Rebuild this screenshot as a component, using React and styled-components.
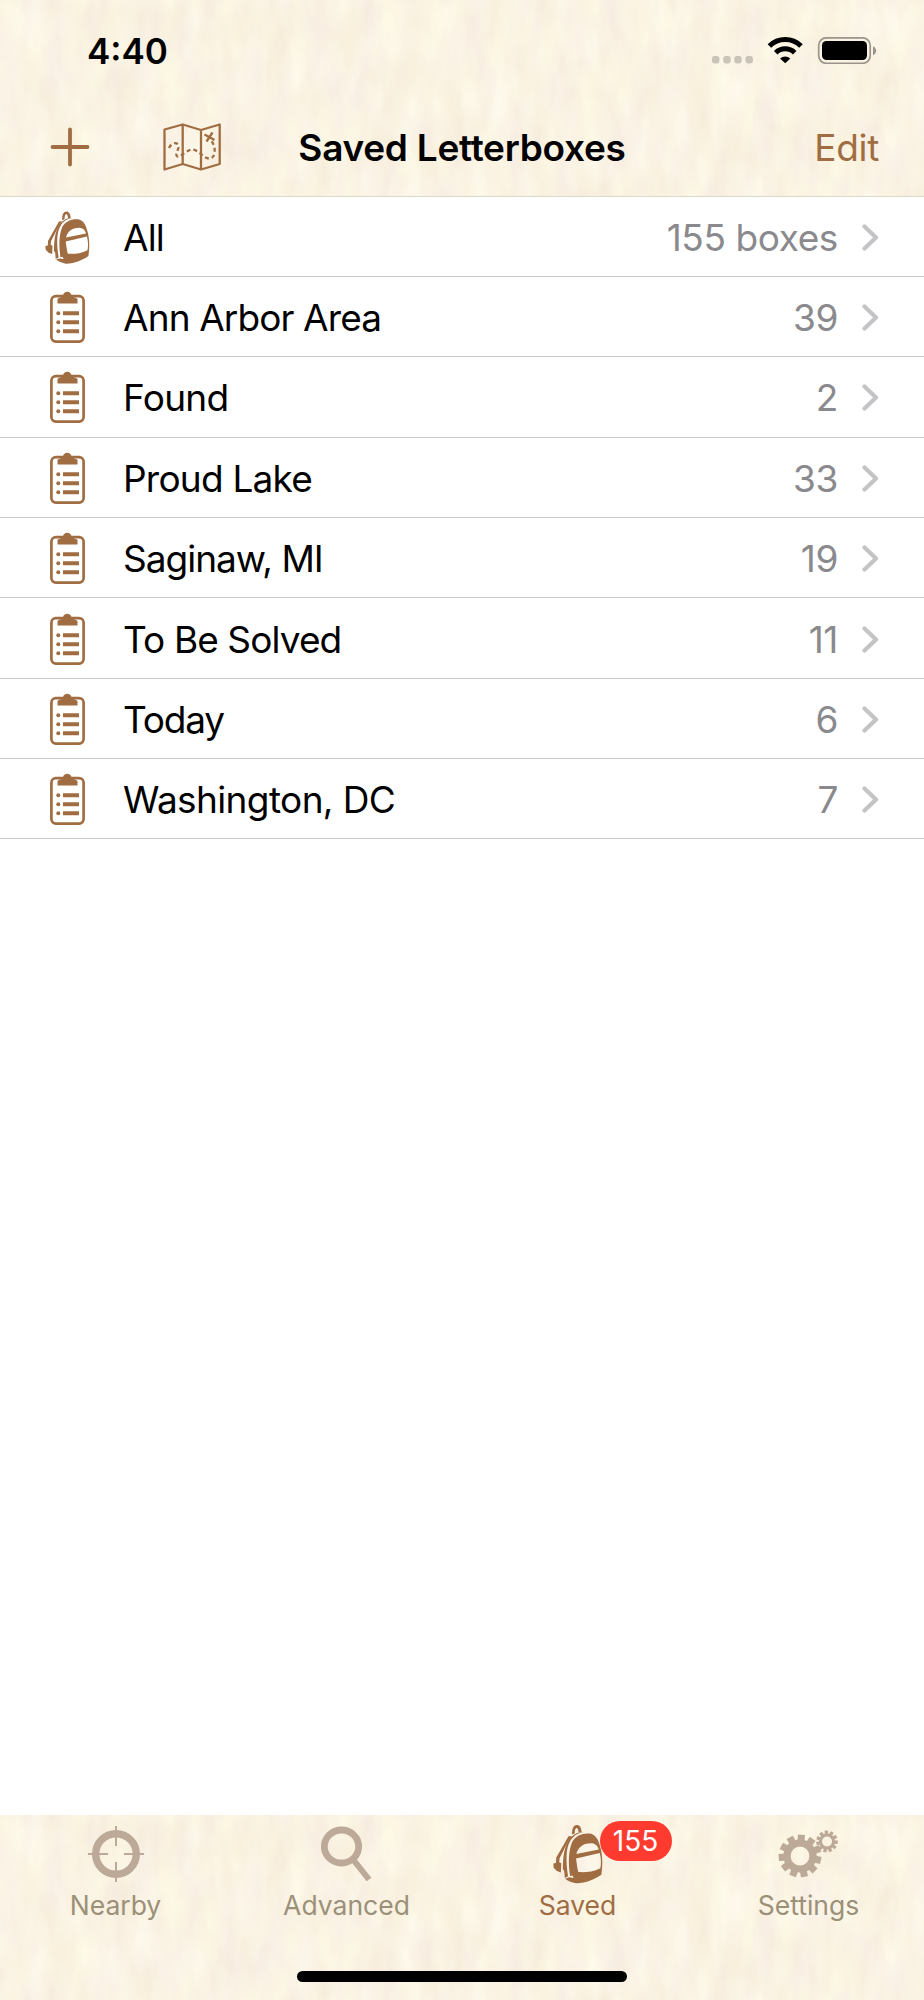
import React from 'react';
import styled, {createGlobalStyle} from 'styled-components';

const GlobalStyle = createGlobalStyle`
    body {
        margin: 0;
        background: #fff;
        font-family: Inter, "Liberation Sans", sans-serif;
    }
`;

const BROWN = '#a06d42';
const MUTED = '#bca998';

const Screen = styled.div`
    display: flex;
    flex-direction: column;
    width: 924px;
    height: 2000px;
    overflow: hidden;
`;

const Paper = styled.div`
    position: relative;
    isolation: isolate;
    flex: none;
    box-sizing: border-box;
    display: flex;
    flex-direction: column;
    background: #faf3e3;
`;

const Header = styled(Paper)`
    height: 196.6px;
    border-bottom: 1px solid #ddd8cc;
`;

const Footer = styled(Paper)`
    height: 185px;
    margin-top: auto;
`;

const Grain = styled.svg`
    position: absolute;
    inset: 0;
    z-index: -1;
    width: 100%;
    height: 100%;
`;

const StatusBar = styled.div`
    display: flex;
    align-items: center;
    height: 101px;
    padding: 0 46px 0 87px;
`;

const Clock = styled.div`
    flex: 1;
    font-size: 35px;
    font-weight: 600;
    letter-spacing: 0;
`;

const NavBar = styled.div`
    display: grid;
    grid-template-columns: 249px 1fr 249px;
    align-items: center;
    height: 92px;
`;

const NavActions = styled.div`
    display: flex;
    align-items: center;
    gap: 73px;
    padding-left: 50px;
`;

const NavTitle = styled.div`
    text-align: center;
    white-space: nowrap;
    font-size: 37px;
    font-weight: 600;
    letter-spacing: -0.27px;
`;

const EditButton = styled.div`
    padding-right: 45px;
    text-align: right;
    font-size: 37px;
    letter-spacing: -0.3px;
    color: ${BROWN};
`;

const Row = styled.div`
    display: flex;
    align-items: center;
    box-sizing: border-box;
    height: 80.36px;
    padding: 2px 45px 0 0;
    border-bottom: 1px solid #c9c9cb;
    font-size: 37px;
`;

const RowIcon = styled.div`
    display: flex;
    justify-content: center;
    width: 135px;
    margin-right: -12px;
`;

const RowName = styled.div`
    flex: 1;
    letter-spacing: ${props => props.$spacing}px;
`;

const RowCount = styled.div`
    margin-right: 24px;
    color: #8a8a8e;
    letter-spacing: -0.4px;
`;

const Tabs = styled.div`
    display: grid;
    grid-template-columns: repeat(4, 1fr);
    height: 156px;
`;

const Tab = styled.div`
    display: flex;
    flex-direction: column;
    align-items: center;
    color: ${props => props.$active ? BROWN : '#9b9078'};
    font-size: 26.5px;
    line-height: 30px;
`;

const TabIcon = styled.div`
    position: relative;
    display: flex;
    align-items: center;
    box-sizing: border-box;
    height: 75px;
    padding-top: 2px;
`;

const Badge = styled.div`
    position: absolute;
    left: 47px;
    top: 6px;
    width: 72px;
    height: 40px;
    border-radius: 20px;
    background: #ff3b30;
    color: #fff;
    text-align: center;
    font-size: 28px;
    line-height: 40px;
`;

const HomeIndicator = styled.div`
    align-self: center;
    width: 330px;
    height: 11px;
    border-radius: 6px;
    background: #000;
`;

// soft vertical fibres of the parchment
function Parchment({id}) {
    return (
        <Grain>
            <filter id={id} x="0" y="0" width="100%" height="100%" colorInterpolationFilters="sRGB">
                <feTurbulence type="fractalNoise" baseFrequency="0.045 0.017" numOctaves="3" seed="8" />
                <feColorMatrix
                    values="0.04 0 0 0 0.961
                            0.08 0 0 0 0.912
                            0.06 0.06 0 0 0.831
                            0 0 0 0 1"
                />
            </filter>
            <rect width="100%" height="100%" filter={`url(#${id})`} />
        </Grain>
    );
}

function Status() {
    return (
        <svg width="166" height="27" viewBox="0 0 166 27">
            <g fill="#c9c4b7">
                <rect x="0" y="19" width="7.4" height="7.4" rx="2.4" />
                <rect x="11.3" y="19" width="7.4" height="7.4" rx="2.4" />
                <rect x="22.3" y="19" width="7.4" height="7.4" rx="2.4" />
                <rect x="33.5" y="19" width="7.4" height="7.4" rx="2.4" />
            </g>
            <g fill="none" stroke="#000" strokeWidth="5">
                <path d="M57.4 9a22.5 22.5 0 0 1 31.6 0" />
                <path d="M63.7 15.700a13.6 13.6 0 0 1 19 0" />
            </g>
            <path d="M73.2 26.2l-5.1-4.7a7.6 7.6 0 0 1 10.2 0z" />
            <rect x="106.7" y="0.9" width="51.5" height="25.4" rx="7.5" fill="none" stroke="#99958b" strokeWidth="1.7" />
            <rect x="110" y="4" width="45" height="19" rx="4.5" />
            <path d="M161 9.3c4.2 1.7 4.2 7.3 0 9z" fill="#99958b" />
        </svg>
    );
}

function PlusIcon() {
    return (
        <svg width="40" height="40" viewBox="0 0 40 40" stroke={BROWN} strokeWidth="3.8" strokeLinecap="round">
            <path d="M20 2.5v35M2.5 20h35" />
        </svg>
    );
}

function MapIcon() {
    return (
        <svg width="58" height="48" viewBox="0 0 58 48" fill="none" stroke={BROWN} strokeWidth="2.3" strokeLinejoin="round">
            <path d="M1.5 6.5L19.7 1.5L38 7L56.7 1.5V41L38 46.5L19.7 41L1.5 46.5zM19.7 1.5V41M38 7V46.5" />
            <path d="M6 25C8 20 14 18.5 15.5 22.5C16.5 26 12.5 29 13.5 32.5C15.5 36.5 21 29 28 26.5C36 26 40 36 47 35.5C53 34.5 53 24 48.5 18" strokeDasharray="4 3" />
            <path d="M41.500 11.500l10 5.500M43.500 18.500l6-9" />
        </svg>
    );
}

function BackpackIcon({width, height}) {
    return (
        <svg width={width} height={height} viewBox="272 73 152 180" fill={BROWN}>
            <path d="M330 104C329 84 336 75 344 75C353 75 358 83 359 96L350 98C349 88 347 84 344 84C340 84 338 91 338 101z" />
            <path d="M319 109L329 108L316 128L292 176L291 188L297 191L296 219L284 215L274 205L273 192L281 190L282 174L307 130z" />
            <path d="M366 97C339 99 321 119 315 150C311 176 314 207 318 231L308 236L306 214L302 209C302 171 307 132 326 112C338 101 350 95 366 97z" />
            <path fillRule="evenodd" d="M324 230C318 190 319 155 330 127C341 107 363 99 383 101C397 103 408 113 414 136C423 164 424 194 419 226C401 239 369 253 342 252C328 249 316 244 309 238L321 234L335 236L331 228zM343 163L411 149C407 137 400 130 388 130C367 130 349 139 343 163zM342 177C344 190 345 203 349 218C370 219 393 218 416 206C419 190 418 174 414 160z" />
        </svg>
    );
}

function ListIcon() {
    return (
        <svg width="36" height="53" viewBox="0 0 36 53" fill={BROWN}>
            <rect x="1.4" y="5.2" width="32.2" height="45.4" rx="4.5" fill="none" stroke={BROWN} strokeWidth="2.7" />
            <path d="M7.5 12.5V8C9 6.500 13 6 13 4.5C13.5-.5 21-.5 21.5 4.5C22 6 26 6.5 27.5 8V12.5z" />
            <circle cx="8.3" cy="22.3" r="2" />
            <circle cx="8.3" cy="31.3" r="2" />
            <circle cx="8.3" cy="40.2" r="2" />
            <path d="M13 20.3h16v4H13zM13 29.3h16v4H13zM13 38.2h16v4H13z" />
        </svg>
    );
}

function Chevron() {
    return (
        <svg width="17" height="27" viewBox="0 0 17 27" fill="none" stroke="#c4c4c6" strokeWidth="4.2" strokeLinecap="round" strokeLinejoin="round">
            <path d="M2.5 2.5L14 13.5L2.5 24.5" />
        </svg>
    );
}

function NearbyIcon() {
    return (
        <svg width="58" height="58" viewBox="0 0 58 58" fill="none" stroke={MUTED}>
            <circle cx="29" cy="29" r="20.3" strokeWidth="7.4" />
            <path d="M29 1v20M29 37v20M1 29h20M37 29h20" strokeWidth="2" />
        </svg>
    );
}

function SearchIcon() {
    return (
        <svg width="52" height="56" viewBox="0 0 52 56" fill="none" stroke={MUTED}>
            <ellipse cx="20.5" cy="20.5" rx="17.2" ry="16.5" strokeWidth="6.8" />
            <path d="M32.5 34L48 53.5" strokeWidth="6" />
        </svg>
    );
}

function Gear({cx, cy, inner, ring, outer, tooth, teeth, turn}) {
    const angles = Array.from({length: teeth}, (_, i) => turn + i * 360 / teeth);
    return (
        <g transform={`translate(${cx} ${cy})`}>
            <circle r={(inner + ring) / 2} fill="none" stroke={MUTED} strokeWidth={ring - inner} />
            {angles.map(angle => (
                <rect
                    key={angle}
                    x={-tooth / 2}
                    y={-outer}
                    width={tooth}
                    height={outer - ring + 1}
                    fill={MUTED}
                    transform={`rotate(${angle})`}
                />
            ))}
        </g>
    );
}

function SettingsIcon() {
    return (
        <svg width="62" height="50" viewBox="0 0 62 50">
            <Gear cx={22} cy={27} inner={9.4} ring={16.6} outer={21.3} tooth={7} teeth={11} turn={4} />
            <Gear cx={49} cy={12.5} inner={5} ring={8} outer={10.8} tooth={3.4} teeth={11} turn={-4} />
        </svg>
    );
}

const lists = [
    {name: 'All', count: '155 boxes', spacing: -0.9},
    {name: 'Ann Arbor Area', count: '39', spacing: -0.88},
    {name: 'Found', count: '2', spacing: -0.7},
    {name: 'Proud Lake', count: '33', spacing: -0.78},
    {name: 'Saginaw, MI', count: '19', spacing: -1},
    {name: 'To Be Solved', count: '11', spacing: -0.9},
    {name: 'Today', count: '6', spacing: -1.2},
    {name: 'Washington, DC', count: '7', spacing: -0.62},
];

function App() {
    return (
        <Screen>
            <GlobalStyle />
            <Header>
                <Parchment id="grain-top" />
                <StatusBar>
                    <Clock>4:40</Clock>
                    <Status />
                </StatusBar>
                <NavBar>
                    <NavActions>
                        <PlusIcon />
                        <MapIcon />
                    </NavActions>
                    <NavTitle>Saved Letterboxes</NavTitle>
                    <EditButton>Edit</EditButton>
                </NavBar>
            </Header>
            {lists.map(list => (
                <Row key={list.name}>
                    <RowIcon>
                        {list.name === 'All' ? <BackpackIcon width={45} height={53} /> : <ListIcon />}
                    </RowIcon>
                    <RowName $spacing={list.spacing}>{list.name}</RowName>
                    <RowCount>{list.count}</RowCount>
                    <Chevron />
                </Row>
            ))}
            <Footer>
                <Parchment id="grain-bottom" />
                <Tabs>
                    <Tab>
                        <TabIcon><NearbyIcon /></TabIcon>
                        Nearby
                    </Tab>
                    <Tab>
                        <TabIcon><SearchIcon /></TabIcon>
                        Advanced
                    </Tab>
                    <Tab $active>
                        <TabIcon>
                            <BackpackIcon width={50} height={60} />
                            <Badge>155</Badge>
                        </TabIcon>
                        Saved
                    </Tab>
                    <Tab>
                        <TabIcon><SettingsIcon /></TabIcon>
                        Settings
                    </Tab>
                </Tabs>
                <HomeIndicator />
            </Footer>
        </Screen>
    );
}

export default App;
